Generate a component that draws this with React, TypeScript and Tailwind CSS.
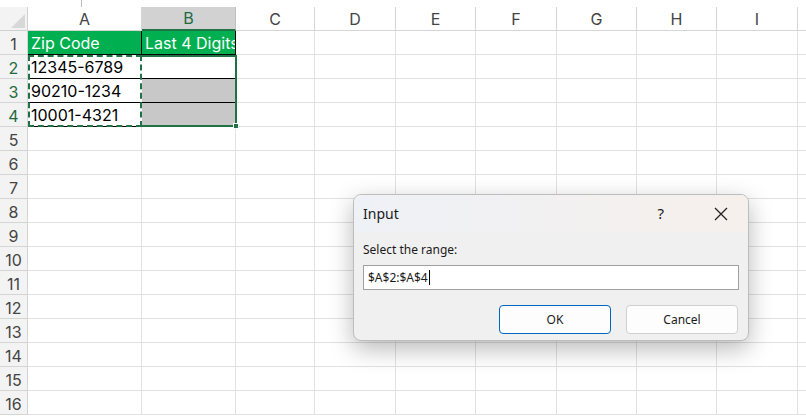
import React from "react";

const COLS = ["A", "B", "C", "D", "E", "F", "G", "H", "I"];
const WIDTHS = [114, 94, 79, 81, 80, 81, 80, 80, 81];
const ROWS = Array.from({ length: 16 }, (_, i) => i + 1);

const data: Record<string, string> = {
  "1A": "Zip Code", "1B": "Last 4 Digits",
  "2A": "12345-6789", "3A": "90210-1234", "4A": "10001-4321",
};

function Cell({ r, c }: { r: number; c: string }) {
  const key = `${r}${c}`;
  const header = r === 1 && (c === "A" || c === "B");
  const gray = c === "B" && (r === 3 || r === 4);
  let cls = "h-[24px] border-r border-b border-[#e1e1e1] px-[3px] flex items-end overflow-hidden whitespace-nowrap";
  if (header) cls = "h-[24px] bg-[#00b050] text-white border-r border-b border-black px-[3px] flex items-end whitespace-nowrap overflow-hidden";
  else if (c === "A" && r >= 2 && r <= 4) cls = "h-[24px] border-b border-black px-[3px] flex items-end text-black";
  else if (c === "B" && r >= 2 && r <= 4) cls = `h-[24px] border-b border-black ${gray ? "bg-[#c8c8c8]" : "bg-white"}`;
  return <div className={cls + " text-[16px] leading-[22px]"}>{data[key]}</div>;
}

export default function App() {
  return (
    <div className="relative w-[806px] h-[418px] bg-white overflow-hidden" style={{ fontFamily: "Inter, 'Liberation Sans', sans-serif" }}>
      <div className="h-[7px] border-l border-[#bbb] ml-[81px] w-px" />
      <div className="grid" style={{ gridTemplateColumns: `28px ${WIDTHS.map((w) => w + "px").join(" ")} 1fr` }}>
        <div className="h-[24px] bg-[#f3f3f3] border-r border-b border-[#d0d0d0] flex items-end justify-end">
          <div className="w-0 h-0 border-l-[14px] border-l-transparent border-b-[14px] border-b-[#d8d8d8] mr-[2px] mb-[2px]" />
        </div>
        {COLS.map((c) => (
          <div key={c} className={`h-[24px] border-r border-b flex items-center justify-center text-[16px] ${c === "B" ? "bg-[#d2d2d2] border-[#c0c0c0] text-[#1e6b42] border-b-2 border-b-[#217346]" : "bg-white border-[#d5d5d5] text-[#444]"}`}>{c}</div>
        ))}
        <div className="h-[24px] border-b border-[#d5d5d5]" />
        {ROWS.map((r) => (
          <React.Fragment key={r}>
            <div className={`h-[24px] bg-[#f3f3f3] border-r border-b border-[#d5d5d5] flex items-center justify-center pt-[2px] text-[16px] ${r >= 2 && r <= 4 ? "text-[#1e6b42]" : "text-[#444]"}`}>{r}</div>
            {COLS.map((c) => <Cell key={c} r={r} c={c} />)}
            <div className="h-[24px] border-b border-[#e1e1e1]" />
          </React.Fragment>
        ))}
      </div>

      {/* selection marquee + range border */}
      <div className="absolute left-[28px] top-[55px] w-[114px] h-[72px] border-2 border-dashed border-[#217346]" />
      <div className="absolute left-[142px] top-[55px] w-[95px] h-[72px] border-2 border-[#217346] border-l-0" />
      <div className="absolute left-[233px] top-[123px] w-[6px] h-[6px] bg-[#217346] border border-white" />

      {/* dialog */}
      <div className="absolute left-[353px] top-[194px] w-[396px] h-[147px] rounded-[8px] border border-[#bdbdbd] bg-[#f0f0f0] shadow-[0_8px_24px_rgba(0,0,0,0.28)] overflow-hidden flex flex-col text-[#1a1a1a]" style={{ fontFamily: "'Segoe UI', 'Noto Sans', sans-serif" }}>
        <div className="h-[37px] bg-gradient-to-r from-[#eef1f6] to-[#f6f0ec] flex items-center pl-[9px] pr-[20px]">
          <span className="text-[14px] flex-1">Input</span>
          <span className="text-[15px] mr-[50px]">?</span>
          <svg width="14" height="14" viewBox="0 0 14 14" stroke="#222" strokeWidth="1.3"><path d="M1 1L13 13M13 1L1 13" /></svg>
        </div>
        <div className="px-[9px] pt-[9px] flex flex-col">
          <span className="text-[12px]">Select the range:</span>
          <div className="mt-[6px] h-[25px] bg-white border border-[#a0a0a0] flex items-center px-[4px] text-[12px]">
            $A$2:$A$4<span className="w-px h-[15px] bg-black ml-[1px]" />
          </div>
          <div className="flex justify-end gap-[15px] mt-[15px] pr-[1px]">
            <button className="w-[112px] h-[29px] bg-[#fdfdfd] rounded-[4px] border border-[#0067c0] text-[12px]">OK</button>
            <button className="w-[112px] h-[29px] bg-[#fdfdfd] rounded-[4px] border border-[#d0d0d0] text-[12px]">Cancel</button>
          </div>
        </div>
      </div>
    </div>
  );
}
